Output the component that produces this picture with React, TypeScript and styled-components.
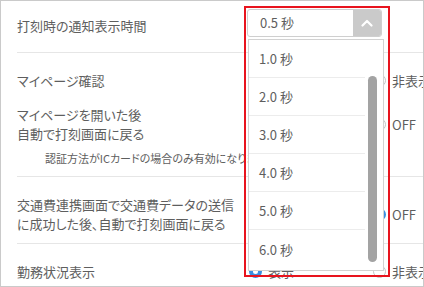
import React from 'react'
import styled, { createGlobalStyle } from 'styled-components'

const GlobalStyle = createGlobalStyle`
  body {
    margin: 0;
    background: #fff;
  }
`;

const durations = ['1.0 秒', '2.0 秒', '3.0 秒', '4.0 秒', '5.0 秒', '6.0 秒'];

interface RadioPairProps {
  options: [string, string];
  checked: 0 | 1;
}

const RadioPair = ({ options, checked }: RadioPairProps) => (
  <RadioGroup>
    {options.map((label, i) => (
      <RadioOption key={label}>
        <RadioDot $checked={checked === i} />
        <span>{label}</span>
      </RadioOption>
    ))}
  </RadioGroup>
);

const TimeSelect = () => (
  <SelectWrap>
    <SelectBox>
      <SelectValue>0.5 秒</SelectValue>
      <SelectButton>
        <svg width="12" height="8" viewBox="0 0 12 8">
          <path d="M1.5 6.5 L6 2 L10.5 6.5" fill="none" stroke="#fff" strokeWidth="2.2" strokeLinecap="round" strokeLinejoin="round" />
        </svg>
      </SelectButton>
    </SelectBox>
    <DropList>
      <Items>
        {durations.map((d) => (
          <Item key={d}>{d}</Item>
        ))}
      </Items>
      <Track>
        <Thumb />
      </Track>
    </DropList>
    <Highlight />
  </SelectWrap>
);

const App = () => {
  return (
    <>
      <GlobalStyle />
      <Frame>
        <Section $pt={8} $pb={15}>
          <Row>
            <Label $offset={7}>打刻時の通知表示時間</Label>
            <TimeSelect />
          </Row>
        </Section>

        <Section $pt={18} $pb={10}>
          <Row $center>
            <Label>マイページ確認</Label>
            <RadioPair options={['表示', '非表示']} checked={0} />
          </Row>
          <Row $center $gap={15}>
            <Label>
              マイページを開いた後
              <br />
              自動で打刻画面に戻る
            </Label>
            <RadioPair options={['ON', 'OFF']} checked={0} />
          </Row>
          <Note>認証方法がICカードの場合のみ有効になります</Note>
        </Section>

        <Section $pt={18} $pb={10}>
          <Row $center>
            <Label>
              交通費連携画面で交通費データの送信
              <br />
              に成功した後、自動で打刻画面に戻る
            </Label>
            <RadioPair options={['ON', 'OFF']} checked={1} />
          </Row>
        </Section>

        <Section $pt={18} $pb={10}>
          <Row $center>
            <Label>勤務状況表示</Label>
            <RadioPair options={['表示', '非表示']} checked={0} />
          </Row>
        </Section>
      </Frame>
    </>
  )
}

const Frame = styled.div`
  width: 424px;
  height: 287px;
  box-sizing: border-box;
  border: 1px solid #cacaca;
  background: #fff;
  overflow: hidden;
  font-family: "Noto Sans CJK JP", "Noto Sans", sans-serif;
  font-feature-settings: "palt";
  font-size: 13px;
  color: #5e5e5e;
`;

const Section = styled.div<{ $pt: number; $pb: number }>`
  display: flex;
  flex-direction: column;
  margin-left: 16px;
  padding: ${(p) => p.$pt}px 0 ${(p) => p.$pb}px;
  border-bottom: 1px solid #e6e6e6;
`;

const Row = styled.div<{ $center?: boolean; $gap?: number }>`
  display: grid;
  grid-template-columns: 231px 1fr;
  align-items: ${(p) => (p.$center ? 'center' : 'start')};
  margin-top: ${(p) => p.$gap ?? 0}px;
`;

const Label = styled.div<{ $offset?: number }>`
  line-height: 19px;
  white-space: nowrap;
  margin-top: ${(p) => p.$offset ?? 0}px;
`;

const Note = styled.div`
  margin-top: 7px;
  padding-left: 28px;
  font-size: 11px;
  line-height: 16px;
  white-space: nowrap;
`;

const RadioGroup = styled.div`
  display: flex;
  margin-left: 1px;
  white-space: nowrap;
`;

const RadioOption = styled.label`
  display: flex;
  align-items: center;
  gap: 6px;
  width: 124px;
  flex-shrink: 0;
  line-height: 19px;
`;

const RadioDot = styled.span<{ $checked: boolean }>`
  width: 13px;
  height: 13px;
  box-sizing: border-box;
  border-radius: 50%;
  background: #fff;
  border: ${(p) => (p.$checked ? '4px solid #3a8de0' : '1px solid #c4c4c4')};
  flex-shrink: 0;
`;

const SelectWrap = styled.div`
  position: relative;
  margin-left: -1px;
  width: 135px;
`;

const SelectBox = styled.div`
  display: flex;
  height: 28px;
  box-sizing: border-box;
  border: 1px solid #cfcfcf;
  border-radius: 3px;
  background: #fff;
`;

const SelectValue = styled.div`
  flex: 1;
  padding-left: 12px;
  line-height: 26px;
`;

const SelectButton = styled.div`
  width: 28px;
  display: flex;
  align-items: center;
  justify-content: center;
  background: #cacaca;
  border-radius: 0 2px 2px 0;
`;

const DropList = styled.div`
  position: absolute;
  top: 30px;
  left: 1px;
  width: 136px;
  height: 232px;
  box-sizing: border-box;
  border: 1px solid #d2d2d2;
  background: #fff;
  display: flex;
  z-index: 2;
`;

const Items = styled.div`
  width: 116px;
  display: flex;
  flex-direction: column;
`;

const Item = styled.div`
  height: 38px;
  box-sizing: border-box;
  padding-left: 10px;
  display: flex;
  align-items: center;
  border-bottom: 1px solid #ececec;

  &:last-child {
    border-bottom: none;
  }
`;

const Track = styled.div`
  flex: 1;
  padding: 36px 0 0 3px;
`;

const Thumb = styled.div`
  width: 9px;
  height: 186px;
  border-radius: 5px;
  background: #a3a3a3;
`;

const Highlight = styled.div`
  position: absolute;
  left: -3px;
  top: -3px;
  width: 146px;
  height: 271px;
  box-sizing: border-box;
  border: 2px solid #e8141e;
  z-index: 3;
  pointer-events: none;
`;

export default App
